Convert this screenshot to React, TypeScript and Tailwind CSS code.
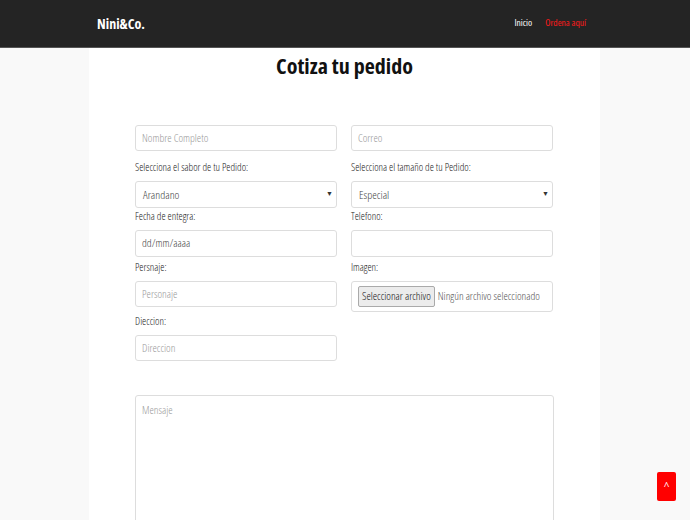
import React from "react";

const font = { fontFamily: '"Open Sans", "Liberation Sans Narrow", sans-serif' };

function Label({ children, className = "" }: { children: React.ReactNode; className?: string }) {
  return <div className={"text-[10.5px] leading-[14px] text-[#222] font-light font-stretch-condensed " + className}>{children}</div>;
}

function Input({ placeholder }: { placeholder?: string }) {
  return (
    <div className="h-[26px] border border-[#ddd] rounded-[3px] bg-white flex items-center px-[6px] text-[11px] text-[#999] font-light font-stretch-condensed">
      {placeholder}
    </div>
  );
}

function Select({ value }: { value: string }) {
  return (
    <div className="h-[27px] border border-[#ddd] rounded-[3px] bg-white flex items-center justify-between pl-[7px] pr-[3px] text-[11.5px] text-[#444] font-light font-stretch-condensed">
      <span>{value}</span>
      <span className="text-[7px] text-[#333]">▼</span>
    </div>
  );
}

export default function App() {
  return (
    <div className="w-[690px] h-[520px] overflow-hidden bg-[#f9f9f9] relative" style={font}>
      <nav className="h-[48px] bg-[#242424] border-b border-[#555] flex items-center justify-between pl-[97px] pr-[104px]">
        <span className="text-white font-bold text-[14px] font-stretch-condensed">Nini&amp;Co.</span>
        <div className="flex items-center gap-[13px] text-[9.5px] font-stretch-condensed">
          <span className="text-[#ffffff]">Inicio</span>
          <span className="text-[#ff1a1a]">Ordena aquí</span>
        </div>
      </nav>
      <div className="ml-[89px] w-[511px] h-[472px] bg-white">
        <h1 className="text-center text-[22px] font-bold text-[#111] pt-[2px] leading-[30px] font-stretch-condensed">Cotiza tu pedido</h1>
        <div className="pl-[46px] pt-[45px]">
          <div className="grid grid-cols-[202px_202px] gap-x-[14px]">
            <Input placeholder="Nombre Completo" />
            <Input placeholder="Correo" />
          </div>
          <div className="grid grid-cols-[202px_202px] gap-x-[14px] mt-[9px]">
            <div className="flex flex-col gap-[7px]">
              <Label>Selecciona el sabor de tu Pedido:</Label>
              <Select value="Arandano" />
            </div>
            <div className="flex flex-col gap-[7px]">
              <Label>Selecciona el tamaño de tu Pedido:</Label>
              <Select value="Especial" />
            </div>
          </div>
          <div className="grid grid-cols-[202px_202px] gap-x-[14px] mt-[1px]">
            <div className="flex flex-col gap-[7px]">
              <Label>Fecha de entegra:</Label>
              <div className="h-[27px] border border-[#ddd] rounded-[3px] bg-white flex items-center px-[6px] text-[11px] text-[#444] font-light font-stretch-condensed">dd/mm/aaaa</div>
            </div>
            <div className="flex flex-col gap-[7px]">
              <Label>Telefono:</Label>
              <div className="h-[27px] border border-[#ddd] rounded-[3px] bg-white" />
            </div>
          </div>
          <div className="grid grid-cols-[202px_202px] gap-x-[14px] mt-[3px] items-start">
            <div className="flex flex-col">
              <Label>Persnaje:</Label>
              <div className="mt-[7px]"><Input placeholder="Personaje" /></div>
              <Label className="mt-[7px]">Dieccion:</Label>
              <div className="mt-[7px]"><Input placeholder="Direccion" /></div>
            </div>
            <div className="flex flex-col gap-[7px]">
              <Label>Imagen:</Label>
              <div className="h-[31px] border border-[#ddd] rounded-[3px] bg-white flex items-center px-[6px] text-[11px] font-light font-stretch-condensed whitespace-nowrap">
                <span className="h-[21px] px-[3px] bg-[#ececec] border border-[#aaa] rounded-[2px] flex items-center text-[#111]">Seleccionar archivo</span>
                <span className="ml-[3px] text-[#555]">Ningún archivo seleccionado</span>
              </div>
            </div>
          </div>
          <div className="mt-[34px] w-[419px] h-[140px] border border-[#ddd] rounded-[3px] px-[6px] pt-[6px] text-[11px] text-[#999] font-light font-stretch-condensed">
            Mensaje
          </div>
        </div>
      </div>
      <div className="absolute left-[657px] top-[472px] w-[19px] h-[29px] bg-[#ff0000] rounded-[2px] flex items-center justify-center text-white text-[10px]">^</div>
    </div>
  );
}
